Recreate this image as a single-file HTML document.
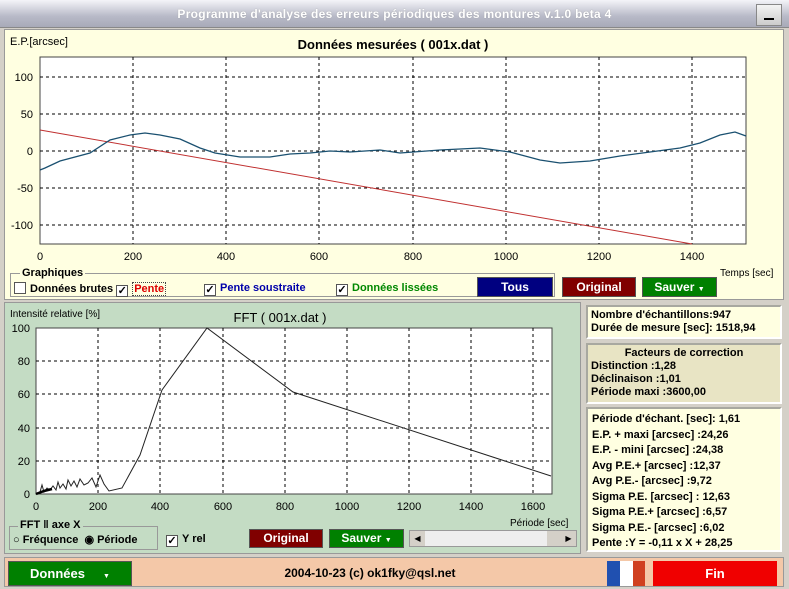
<!DOCTYPE html>
<html><head><meta charset="utf-8">
<style>
*{margin:0;padding:0;box-sizing:border-box}
body{width:789px;height:589px;overflow:hidden;background:#d4d0c8;font-family:"Liberation Sans",sans-serif;position:relative}
.abs{position:absolute}
.tb{left:0;top:0;width:789px;height:28px;background:linear-gradient(#f4f4f8,#b8bac8 60%,#a8aab8);border-bottom:1px solid #888}
.title{left:0;top:7px;width:789px;text-align:center;color:#fff;font-weight:bold;font-size:12px;letter-spacing:0.3px;text-shadow:0 0 1px #999}
.min{left:756px;top:4px;width:26px;height:22px;background:linear-gradient(#f4f4f4,#ccc);border:1px solid #888}
.btn{color:#fff;font-weight:bold;font-size:12px;text-align:center;border:1px solid #555}
.t{font-size:11px;white-space:nowrap}
.b{font-weight:bold}
.box{border:2px solid #a8a8a0;border-right-color:#fff;border-bottom-color:#fff}
.cb{display:inline-block;width:12px;height:12px;border:1px solid #555;background:#fff;font-size:11px;line-height:10px;text-align:center;font-weight:bold;vertical-align:-2px;margin-right:4px}
</style></head><body>
<div class="abs tb"></div>
<div class="abs title">Programme d'analyse des erreurs périodiques des montures v.1.0 beta 4</div>
<div class="abs min"><div class="abs" style="left:7px;top:13px;width:10px;height:2px;background:#000"></div></div>

<div class="abs" style="left:4px;top:29px;width:780px;height:271px;background:#ffffe1;border:1px solid #999"></div>
<svg class="abs" style="left:0;top:0" width="789" height="300">
<rect x="40" y="57" width="706" height="187" fill="#fff" stroke="#444"/>
<g stroke="#000" stroke-dasharray="3,3" stroke-width="1">
<line x1="133" y1="57" x2="133" y2="244"/><line x1="226" y1="57" x2="226" y2="244"/><line x1="319" y1="57" x2="319" y2="244"/><line x1="413" y1="57" x2="413" y2="244"/><line x1="506" y1="57" x2="506" y2="244"/><line x1="599" y1="57" x2="599" y2="244"/><line x1="692" y1="57" x2="692" y2="244"/>
<line x1="40" y1="77" x2="746" y2="77"/><line x1="40" y1="114" x2="746" y2="114"/><line x1="40" y1="151" x2="746" y2="151"/><line x1="40" y1="188" x2="746" y2="188"/><line x1="40" y1="225" x2="746" y2="225"/>
</g>
<line x1="40" y1="130" x2="692" y2="244" stroke="#c03030" stroke-width="1"/>
<polyline id="sig" fill="none" stroke="#1a5070" stroke-width="1.3" points="40,170 45,168 60,161 90,153 110,140 130,135 145,133 160,135 180,139 200,148 215,153 240,157 270,157 290,154 310,153 330,151 350,152 380,150 400,153 440,150 480,148 510,152 540,160 560,163 590,161 620,156 650,152 680,148 700,143 720,135 735,132 746,136"/>
<g font-size="11" fill="#000" text-anchor="end">
<text x="33" y="81">100</text><text x="33" y="118">50</text><text x="33" y="155">0</text><text x="33" y="192">-50</text><text x="33" y="229">-100</text></g>
<g font-size="11" fill="#000" text-anchor="middle">
<text x="40" y="260">0</text><text x="133" y="260">200</text><text x="226" y="260">400</text><text x="319" y="260">600</text><text x="413" y="260">800</text><text x="506" y="260">1000</text><text x="599" y="260">1200</text><text x="692" y="260">1400</text></g>
<text x="10" y="45" font-size="11">E.P.[arcsec]</text>
<text x="393" y="49" font-size="13" font-weight="bold" text-anchor="middle">Données mesurées ( 001x.dat )</text>
<text x="720" y="276" font-size="10">Temps [sec]</text>
</svg>
<div class="abs" style="left:10px;top:273px;width:545px;height:24px;border:1px solid #999"></div>
<div class="abs t b" style="left:20px;top:267px;background:#ffffe1;padding:0 2px">Graphiques</div>
<div class="abs t b" style="left:14px;top:282px"><span class="cb"></span>Données brutes <span class="cb">✓</span><span style="color:#d00;border:1px dotted #444;padding:0 1px">Pente</span></div>
<div class="abs t b" style="left:204px;top:282px;color:#00a"><span class="cb" style="color:#000">✓</span>Pente soustraite</div>
<div class="abs t b" style="left:336px;top:282px;color:#080"><span class="cb" style="color:#000">✓</span>Données lissées</div>
<div class="abs btn" style="left:477px;top:277px;width:76px;height:20px;line-height:18px;background:#000080">Tous</div>
<div class="abs btn" style="left:562px;top:277px;width:74px;height:20px;line-height:18px;background:#800000">Original</div>
<div class="abs btn" style="left:642px;top:277px;width:75px;height:20px;line-height:18px;background:#008000">Sauver <span style="font-size:7px">▼</span></div>

<div class="abs" style="left:4px;top:302px;width:577px;height:252px;background:#c4dcc4;border:1px solid #999"></div>
<svg class="abs" style="left:0;top:300px" width="581" height="255">
<rect x="36" y="28" width="516" height="166" fill="#fff" stroke="#444"/>
<g stroke="#000" stroke-dasharray="3,3">
<line x1="98" y1="28" x2="98" y2="194"/><line x1="160" y1="28" x2="160" y2="194"/><line x1="223" y1="28" x2="223" y2="194"/><line x1="285" y1="28" x2="285" y2="194"/><line x1="347" y1="28" x2="347" y2="194"/><line x1="409" y1="28" x2="409" y2="194"/><line x1="471" y1="28" x2="471" y2="194"/><line x1="533" y1="28" x2="533" y2="194"/>
<line x1="36" y1="61" x2="552" y2="61"/><line x1="36" y1="94" x2="552" y2="94"/><line x1="36" y1="128" x2="552" y2="128"/><line x1="36" y1="161" x2="552" y2="161"/></g>
<polyline fill="none" stroke="#222" stroke-width="1" points="36,194 40,192 42,185 44,192 47,188 50,190 53,186 56,190 58,182 60,188 63,184 66,189 68,180 71,186 74,181 77,187 80,179 84,185 88,183 92,178 96,187 100,175 104,184 109,191 122,188 140,155 162,90 207,28 293,92 551,176"/>
<polyline fill="none" stroke="#000" stroke-width="2.5" points="36,194 44,191 52,189"/>
<g font-size="11" text-anchor="end"><text x="30" y="32">100</text><text x="30" y="65">80</text><text x="30" y="98">60</text><text x="30" y="132">40</text><text x="30" y="165">20</text><text x="30" y="198">0</text></g>
<g font-size="11" text-anchor="middle"><text x="36" y="210">0</text><text x="98" y="210">200</text><text x="160" y="210">400</text><text x="223" y="210">600</text><text x="285" y="210">800</text><text x="347" y="210">1000</text><text x="409" y="210">1200</text><text x="471" y="210">1400</text><text x="533" y="210">1600</text></g>
<text x="10" y="17" font-size="10">Intensité relative [%]</text>
<text x="280" y="22" font-size="13" text-anchor="middle">FFT ( 001x.dat )</text>
<text x="510" y="226" font-size="10">Période [sec]</text>
</svg>
<div class="abs" style="left:9px;top:526px;width:149px;height:24px;border:1px solid #999"></div>
<div class="abs t b" style="left:18px;top:519px;background:#c4dcc4;padding:0 2px">FFT ‖ axe X</div>
<div class="abs t b" style="left:13px;top:533px">○ Fréquence &nbsp;◉ Période</div>
<div class="abs t b" style="left:166px;top:533px"><span class="cb">✓</span>Y rel</div>
<div class="abs btn" style="left:249px;top:529px;width:74px;height:19px;line-height:17px;background:#800000">Original</div>
<div class="abs btn" style="left:329px;top:529px;width:75px;height:19px;line-height:17px;background:#008000">Sauver <span style="font-size:7px">▼</span></div>
<div class="abs" style="left:409px;top:530px;width:168px;height:17px;background:#eee;border:1px solid #999"></div>
<div class="abs" style="left:410px;top:531px;width:15px;height:15px;background:#d4d0c8;font-size:8px;text-align:center;line-height:15px">◀</div>
<div class="abs" style="left:547px;top:531px;width:14px;height:15px;background:#d4d0c8"></div>
<div class="abs" style="left:561px;top:531px;width:15px;height:15px;background:#d4d0c8;font-size:8px;text-align:center;line-height:15px">▶</div>

<div class="abs" style="left:582px;top:302px;width:202px;height:252px;background:#d4d0c8"></div>
<div class="abs box t b" style="left:586px;top:305px;width:196px;height:34px;background:#ffffe1;padding:2px 3px;line-height:13px">Nombre d'échantillons:947<br>Durée de mesure [sec]: 1518,94</div>
<div class="abs box t b" style="left:586px;top:343px;width:196px;height:61px;background:#e8e4c4;padding:2px 3px;line-height:13px"><div style="text-align:center">Facteurs de correction</div>Distinction :1,28<br>Déclinaison :1,01<br>Période maxi :3600,00</div>
<div class="abs box t b" style="left:586px;top:407px;width:196px;height:145px;background:#ffffe1;padding:3px 4px;line-height:15.5px">Période d'échant. [sec]: 1,61<br>E.P. + maxi [arcsec] :24,26<br>E.P. - mini [arcsec] :24,38<br>Avg P.E.+ [arcsec] :12,37<br>Avg P.E.- [arcsec] :9,72<br>Sigma P.E. [arcsec] : 12,63<br>Sigma P.E.+ [arcsec] :6,57<br>Sigma P.E.- [arcsec] :6,02<br>Pente :Y = -0,11 x X + 28,25</div>

<div class="abs" style="left:4px;top:557px;width:780px;height:30px;background:#f4c8a8;border:1px solid #999"></div>
<div class="abs btn" style="left:8px;top:561px;width:124px;height:25px;line-height:24px;background:#008000;font-size:13px">Données &nbsp;&nbsp;&nbsp;&nbsp;<span style="font-size:7px">▼</span></div>
<div class="abs t b" style="left:200px;top:566px;width:340px;text-align:center;font-size:12px">2004-10-23 (c) ok1fky@qsl.net</div>
<div class="abs" style="left:607px;top:561px;width:13px;height:25px;background:#2050b0"></div>
<div class="abs" style="left:620px;top:561px;width:13px;height:25px;background:#fff"></div>
<div class="abs" style="left:633px;top:561px;width:12px;height:25px;background:#d04020"></div>
<div class="abs btn" style="left:653px;top:561px;width:124px;height:25px;line-height:24px;background:#f00000;font-size:13px;border-color:#f00000">Fin</div>
</body></html>
